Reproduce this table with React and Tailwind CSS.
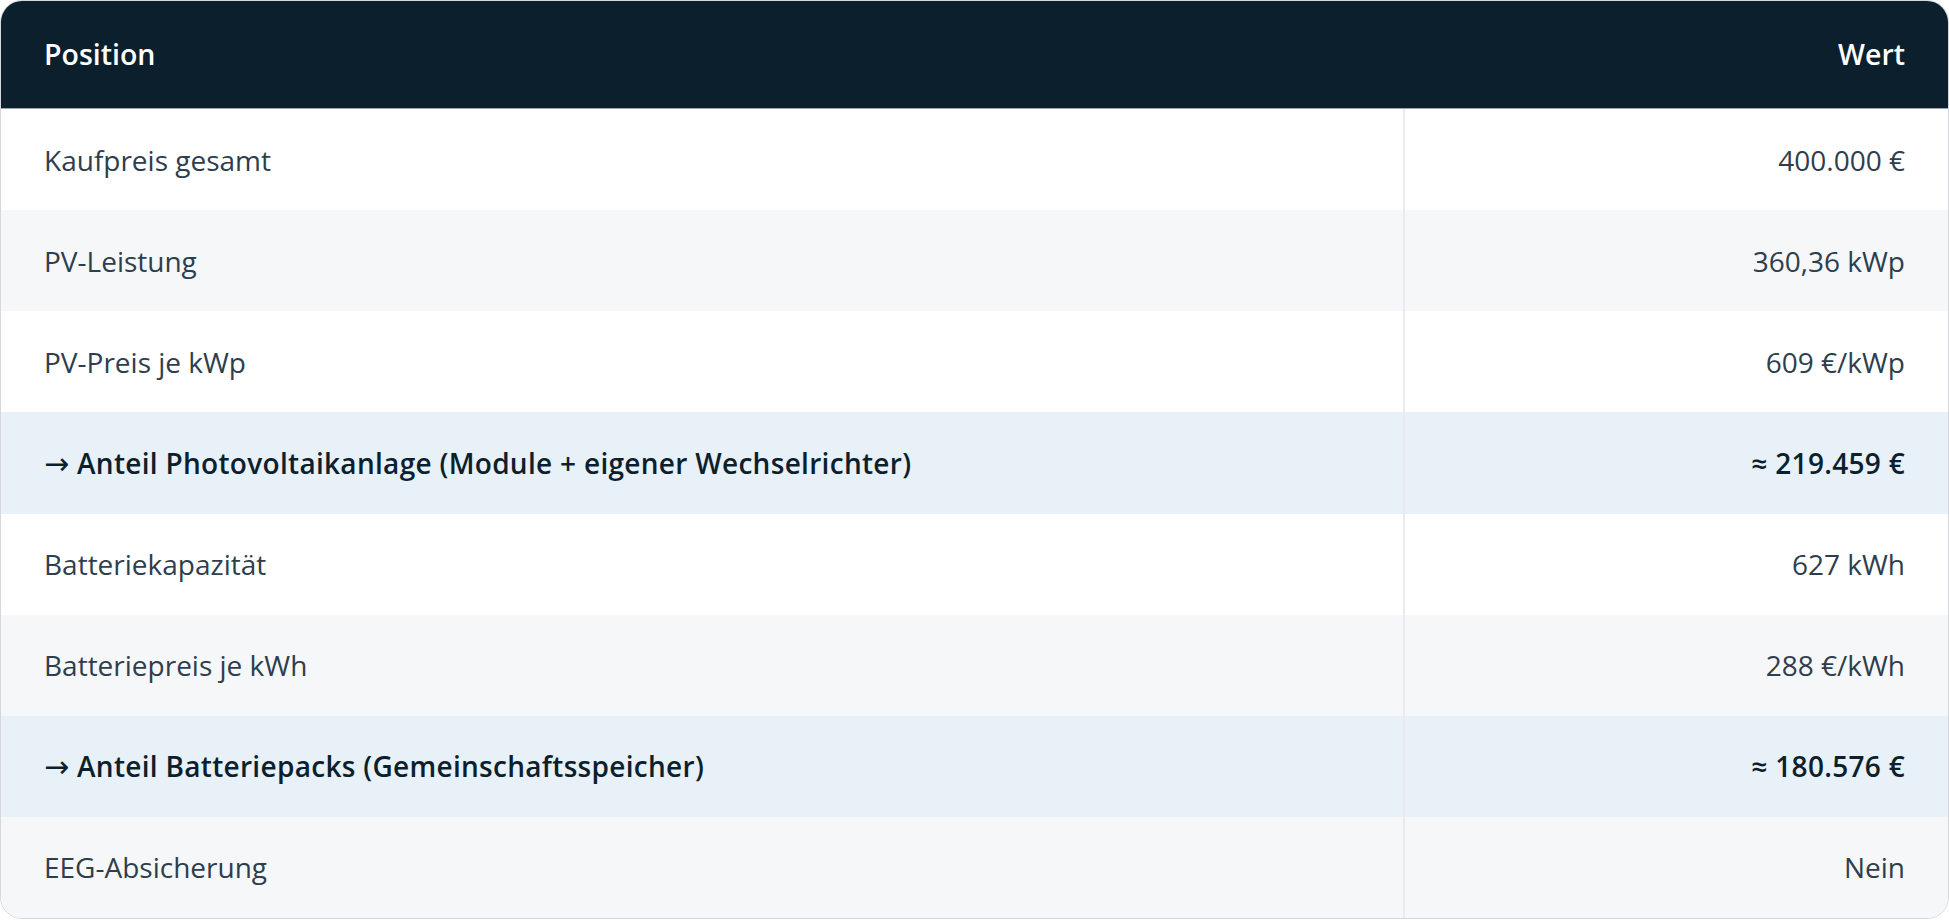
import React from "react";

const rows = [
  { label: "Kaufpreis gesamt", value: "400.000 €", bg: "bg-white" },
  { label: "PV-Leistung", value: "360,36 kWp", bg: "bg-[#f6f7f9]" },
  { label: "PV-Preis je kWp", value: "609 €/kWp", bg: "bg-white" },
  { label: "→ Anteil Photovoltaikanlage (Module + eigener Wechselrichter)", value: "≈ 219.459 €", bg: "bg-[#e8f0f8]", bold: true },
  { label: "Batteriekapazität", value: "627 kWh", bg: "bg-white" },
  { label: "Batteriepreis je kWh", value: "288 €/kWh", bg: "bg-[#f6f7f9]" },
  { label: "→ Anteil Batteriepacks (Gemeinschaftsspeicher)", value: "≈ 180.576 €", bg: "bg-[#e8f0f8]", bold: true },
  { label: "EEG-Absicherung", value: "Nein", bg: "bg-[#f6f7f9]" },
];

function Label({ text }) {
  if (text.startsWith("→ ")) {
    return (
      <span>
        <span className="text-[30px] leading-none font-normal" style={{ fontFamily: '"DejaVu Sans", sans-serif' }}>→</span>
        {" " + text.slice(2)}
      </span>
    );
  }
  return <span>{text}</span>;
}

export default function App() {
  return (
    <div className="w-[1949px] h-[920px] bg-white" style={{ fontFamily: '"Open Sans", "Noto Sans", sans-serif' }}>
      <div className="w-full h-[919px] border border-[#d4d8dd] rounded-[22px] overflow-hidden flex flex-col">
        <div className="h-[108px] shrink-0 bg-[#0c1f2d] border-b border-[#9aa5b1] flex items-center justify-between px-[43px] text-white text-[28.5px] font-semibold">
          <span>Position</span>
          <span>Wert</span>
        </div>
        {rows.map((r, i) => (
          <div key={i} className={`flex-1 flex ${r.bg} text-[28px] ${r.bold ? "font-semibold text-[#0c1f2d] tracking-[0.3px]" : "text-[#2e3e4c]"}`}>
            <div className="w-[1402px] shrink-0 flex items-center pl-[43px]">
              <Label text={r.label} />
            </div>
            <div className="flex-1 border-l-2 border-[#e9ebee] flex items-center justify-end pr-[43px]">{r.value}</div>
          </div>
        ))}
      </div>
    </div>
  );
}
